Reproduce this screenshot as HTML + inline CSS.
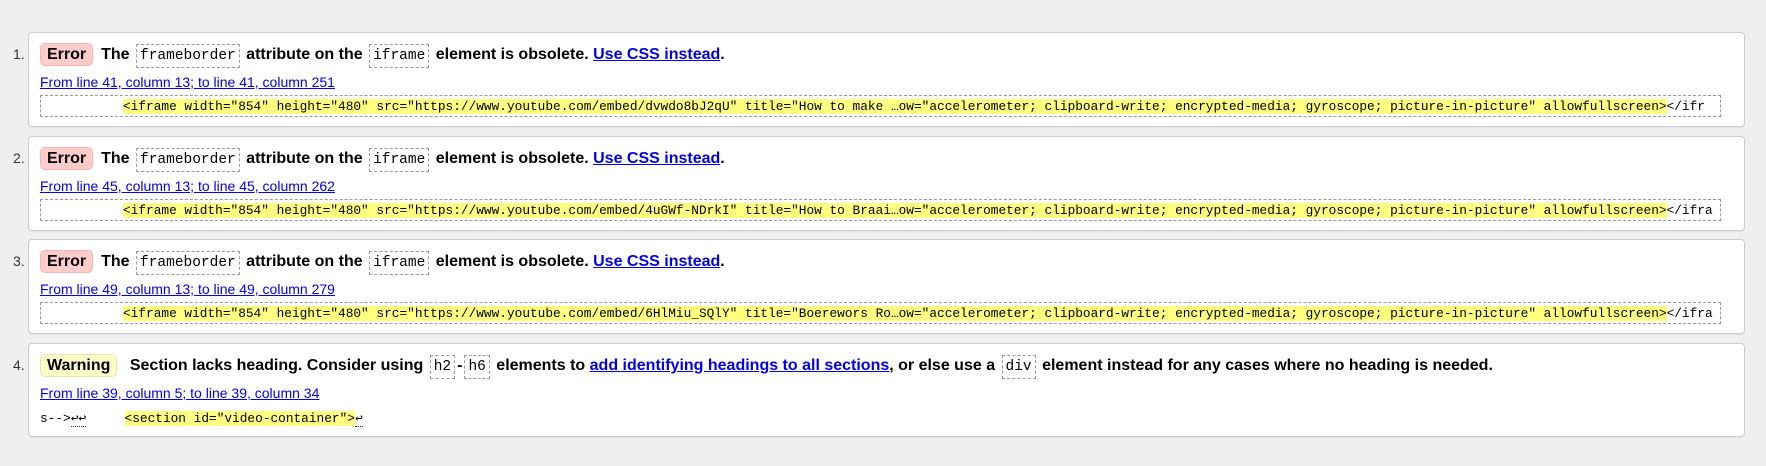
<!DOCTYPE html>
<html><head><meta charset="utf-8"><style>
body{margin:0;background:#efefef;width:1766px;height:466px;overflow:hidden;font-family:"Liberation Sans",Arial,sans-serif;}
.card{position:absolute;left:28px;width:1715px;background:#fff;border:1px solid #ccc;border-radius:4px;box-shadow:0 1px 1px rgba(0,0,0,.05);}
.num{position:absolute;left:-16px;top:13px;font-size:14px;color:#333;}
.title{position:absolute;left:11px;top:10px;font-size:16px;font-weight:bold;white-space:nowrap;line-height:22px;}
.badge{display:inline-block;padding:0 6px;border-radius:5px;margin-right:8px;line-height:21px;}
.err{background:#fcc;border:1px solid #f2b6b6;}
.warn{background:#ffffc8;border:1px solid #e6e6b0;}
.m{font-family:"Liberation Mono",monospace;font-weight:normal;font-size:14.5px;border:1px dashed #999;padding:3px 3px;margin:0 2px;}
a{color:#00e;text-decoration:underline;}
.loc{position:absolute;left:11px;top:41px;font-size:14px;white-space:nowrap;}
.code{position:absolute;left:11px;top:62px;height:22px;border:1px dashed #999;overflow:hidden;white-space:pre;font-family:"Liberation Mono",monospace;font-size:12.8px;line-height:22px;padding-left:82px;box-sizing:border-box;width:1681px;}
.hl{background:#ffff80;}
.plain{position:absolute;left:11px;top:64px;white-space:pre;font-family:"Liberation Mono",monospace;font-size:12.8px;line-height:21px;}
.u{border-bottom:1px dotted #333;}
</style></head><body>

<div class="card" style="top:32px;height:93px;"><span class="num">1.</span>
<div class="title"><span class="badge err">Error</span>The <span class="m">frameborder</span> attribute on the <span class="m">iframe</span> element is obsolete. <a>Use CSS instead</a>.</div>
<a class="loc">From line 41, column 13; to line 41, column 251</a>
<div class="code"><span class="hl">&lt;iframe width="854" height="480" src="https://www.youtube.com/embed/dvwdo8bJ2qU" title="How to make …ow="accelerometer; clipboard-write; encrypted-media; gyroscope; picture-in-picture" allowfullscreen&gt;</span>&lt;/ifr</div>
</div>

<div class="card" style="top:136px;height:93px;"><span class="num">2.</span>
<div class="title"><span class="badge err">Error</span>The <span class="m">frameborder</span> attribute on the <span class="m">iframe</span> element is obsolete. <a>Use CSS instead</a>.</div>
<a class="loc">From line 45, column 13; to line 45, column 262</a>
<div class="code"><span class="hl">&lt;iframe width="854" height="480" src="https://www.youtube.com/embed/4uGWf-NDrkI" title="How to Braai…ow="accelerometer; clipboard-write; encrypted-media; gyroscope; picture-in-picture" allowfullscreen&gt;</span>&lt;/ifra</div>
</div>

<div class="card" style="top:239px;height:93px;"><span class="num">3.</span>
<div class="title"><span class="badge err">Error</span>The <span class="m">frameborder</span> attribute on the <span class="m">iframe</span> element is obsolete. <a>Use CSS instead</a>.</div>
<a class="loc">From line 49, column 13; to line 49, column 279</a>
<div class="code"><span class="hl">&lt;iframe width="854" height="480" src="https://www.youtube.com/embed/6HlMiu_SQlY" title="Boerewors Ro…ow="accelerometer; clipboard-write; encrypted-media; gyroscope; picture-in-picture" allowfullscreen&gt;</span>&lt;/ifra</div>
</div>

<div class="card" style="top:343px;height:92px;"><span class="num">4.</span>
<div class="title"><span class="badge warn">Warning</span> Section lacks heading. Consider using <span class="m">h2</span>-<span class="m">h6</span> elements to <a>add identifying headings to all sections</a>, or else use a <span class="m">div</span> element instead for any cases where no heading is needed.</div>
<a class="loc">From line 39, column 5; to line 39, column 34</a>
<div class="plain">s--&gt;<span class="u">↩↩</span>     <span class="hl">&lt;section id="video-container"&gt;</span><span class="u">↩</span></div>
</div>

</body></html>
